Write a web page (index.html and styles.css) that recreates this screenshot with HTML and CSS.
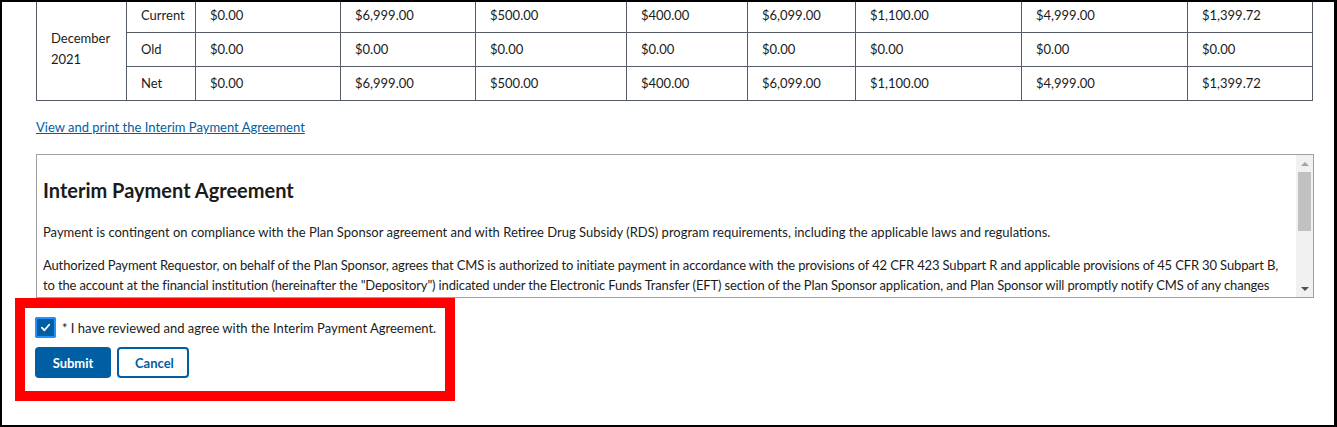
FILE: index.html
```html
<!DOCTYPE html>
<html lang="en">
<head>
<meta charset="utf-8">
<title>Interim Payment Agreement</title>
<link rel="stylesheet" href="styles.css">
</head>
<body>
<div class="frame">
  <table class="pay-table">
    <colgroup>
      <col style="width:90px"><col style="width:69px"><col style="width:145px"><col style="width:135px"><col style="width:151px"><col style="width:121px"><col style="width:108px"><col style="width:166px"><col style="width:166px"><col style="width:125px">
    </colgroup>
    <tbody>
      <tr>
        <td rowspan="3" class="period">December<br>2021</td>
        <td>Current</td><td>$0.00</td><td>$6,999.00</td><td>$500.00</td><td>$400.00</td><td>$6,099.00</td><td>$1,100.00</td><td>$4,999.00</td><td>$1,399.72</td>
      </tr>
      <tr>
        <td>Old</td><td>$0.00</td><td>$0.00</td><td>$0.00</td><td>$0.00</td><td>$0.00</td><td>$0.00</td><td>$0.00</td><td>$0.00</td>
      </tr>
      <tr>
        <td>Net</td><td>$0.00</td><td>$6,999.00</td><td>$500.00</td><td>$400.00</td><td>$6,099.00</td><td>$1,100.00</td><td>$4,999.00</td><td>$1,399.72</td>
      </tr>
    </tbody>
  </table>

  <a class="print-link" href="#">View and print the Interim Payment Agreement</a>

  <div class="agreement">
    <div class="agreement-body">
      <h2>Interim Payment Agreement</h2>
      <p>Payment is contingent on compliance with the Plan Sponsor agreement and with Retiree Drug Subsidy (RDS) program requirements, including the applicable laws and regulations.</p>
      <p class="tight">Authorized Payment Requestor, on behalf of the Plan Sponsor, agrees that CMS is authorized to initiate payment in accordance with the provisions of 42 CFR 423 Subpart R and applicable provisions of 45 CFR 30 Subpart B,<br>to the account at the financial institution (hereinafter the "Depository") indicated under the Electronic Funds Transfer (EFT) section of the Plan Sponsor application, and Plan Sponsor will promptly notify CMS of any changes</p>
    </div>
    <div class="scrollbar">
      <span class="arrow up"></span>
      <span class="track"><span class="thumb"></span></span>
      <span class="arrow down"></span>
    </div>
  </div>

  <div class="highlight">
    <label class="check-row">
      <span class="checkbox">
        <svg viewBox="0 0 12 12" width="11" height="11"><path d="M2 6.2 L4.8 9 L10 3" fill="none" stroke="#fff" stroke-width="2" stroke-linecap="round" stroke-linejoin="round"/></svg>
      </span>
      <span class="check-label">* I have reviewed and agree with the Interim Payment Agreement.</span>
    </label>
    <div class="actions">
      <button class="btn btn-primary" type="button">Submit</button>
      <button class="btn btn-outline" type="button">Cancel</button>
    </div>
  </div>
</div>
</body>
</html>
```

FILE: styles.css
```css
* { box-sizing: border-box; }

html, body {
  margin: 0;
  padding: 0;
  background: #fff;
}

body {
  font-family: "Lato", "Liberation Sans", sans-serif;
  font-size: 13px;
  color: #1b1b1b;
}

.frame {
  width: 1337px;
  height: 427px;
  border: 2px solid #000;
  border-right-width: 3px;
  overflow: hidden;
  padding: 0 22px 0 34px;
}

.pay-table {
  border-collapse: collapse;
  table-layout: fixed;
  width: 1277px;
  margin-top: -4px;
}

.pay-table td {
  border: 1px solid #565c65;
  height: 34px;
  padding: 0 14px 2px;
  line-height: 20px;
  vertical-align: middle;
  white-space: nowrap;
}

.pay-table td.period {
  line-height: 21px;
}

.print-link {
  display: inline-block;
  margin-top: 16px;
  color: #005ea2;
  text-decoration: underline;
  line-height: 20px;
}

.agreement {
  display: flex;
  margin-top: 17px;
  width: 1278px;
  height: 144px;
  border: 1px solid #a0a0a0;
}

.agreement-body {
  flex: 1;
  overflow: hidden;
  padding: 0 0 0 6px;
}

.agreement-body h2 {
  margin: 23px 0 20px;
  font-size: 20px;
  line-height: 24px;
  font-weight: 700;
}

.agreement-body p {
  margin: 0 0 13px;
  line-height: 20px;
  white-space: nowrap;
}

.agreement-body p.tight {
  letter-spacing: -0.14px;
}

.scrollbar {
  width: 17px;
  display: flex;
  flex-direction: column;
  background: #f1f1f1;
}

.arrow {
  height: 17px;
  display: flex;
  align-items: center;
  justify-content: center;
}

.arrow::before {
  content: "";
  border-left: 4px solid transparent;
  border-right: 4px solid transparent;
}

.arrow.up::before { border-bottom: 4px solid #a3a3a3; }
.arrow.down::before { border-top: 4px solid #505050; }

.track {
  flex: 1;
  padding: 0 2px;
}

.thumb {
  display: block;
  height: 59px;
  background: #c1c1c1;
}

.highlight {
  margin: 0 0 0 -21px;
  width: 440px;
  border: 10px solid #ff0000;
  padding: 9px 0 13px 10px;
}

.check-row {
  display: flex;
  align-items: center;
  gap: 6px;
  cursor: pointer;
}

.checkbox {
  width: 21px;
  height: 21px;
  display: flex;
  align-items: center;
  justify-content: center;
  background: #005ea2;
  border-radius: 3px;
  box-shadow: 0 0 0 2px #2491ff inset, 0 0 0 3px #005ea2 inset;
}

.check-label {
  line-height: 20px;
}

.actions {
  display: flex;
  gap: 6px;
  margin-top: 9px;
}

.btn {
  font-family: inherit;
  font-size: 13px;
  font-weight: 700;
  height: 31px;
  border-radius: 4px;
  padding: 0 16px;
  cursor: pointer;
}

.btn-primary {
  width: 76px;
  background: #005ea2;
  color: #fff;
  border: 0;
}

.btn-outline {
  width: 72px;
  background: #fff;
  color: #005ea2;
  border: 2px solid #005ea2;
}
```
